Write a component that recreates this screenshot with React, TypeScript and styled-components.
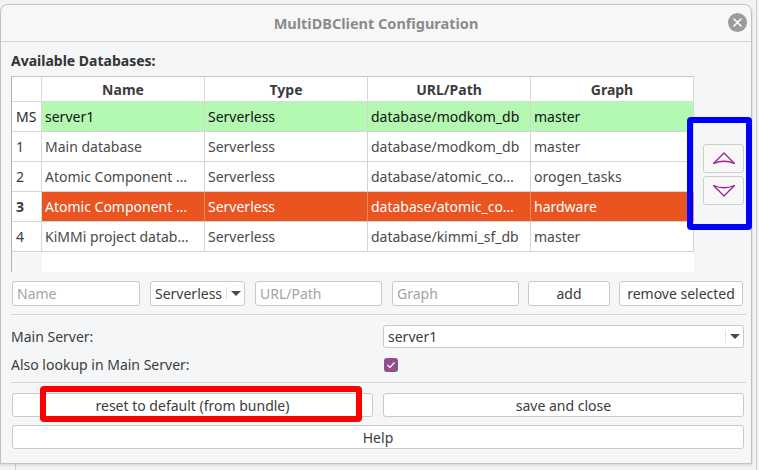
import React from "react";
import styled, { createGlobalStyle } from "styled-components";

const Global = createGlobalStyle`
  html, body { margin: 0; padding: 0; }
  body {
    width: 759px; height: 470px; overflow: hidden;
    background: #f3f3f3;
    font-family: "Noto Sans", "DejaVu Sans", sans-serif;
    font-size: 14px; color: #3c3c3c;
  }
  * { box-sizing: border-box; }
`;

const Screen = styled.div`
  position: relative;
  width: 759px; height: 470px;
  padding-top: 4px;
`;

const BackLine = styled.div<{ $x: number; $y: number; $w: number; $h: number }>`
  position: absolute;
  left: ${(p) => p.$x}px; top: ${(p) => p.$y}px;
  width: ${(p) => p.$w}px; height: ${(p) => p.$h}px;
  background: #cfcfcf;
`;

const Window = styled.div`
  position: relative;
  width: 752px; height: 460px;
  background: #f5f6f7;
  border: 1px solid #c2c2c2;
  border-radius: 8px 8px 0 0;
  box-shadow: 0 1px 3px rgba(0,0,0,0.15);
  display: flex; flex-direction: column;
`;

const TitleBar = styled.div`
  position: relative;
  height: 37px;
  background: #f7f7f7;
  border-bottom: 1px solid #d6d6d6;
  border-radius: 8px 8px 0 0;
  display: flex; align-items: center; justify-content: center;
  font-weight: 700; color: #8b8b8b; font-size: 14.5px;
`;

const CloseButton = styled.div`
  position: absolute; right: 4px; top: 8px;
  width: 19px; height: 19px; border-radius: 50%;
  background: #9b9b9b;
  display: flex; align-items: center; justify-content: center;
`;

const Content = styled.div`
  flex: 1;
  padding: 9px 6px 0 10px;
  display: flex; flex-direction: column;
`;

const SectionLabel = styled.div`
  font-weight: 700; color: #333;
  line-height: 20px; height: 20px;
  margin-bottom: 5px;
`;

const TableArea = styled.div`
  display: flex; align-items: center;
`;

const Table = styled.div`
  width: 683px; height: 196px;
  background: #fff;
  border-top: 1px solid #c6c6c6;
  border-left: 1px solid #b4b4b4;
  display: grid;
  grid-template-columns: 30px 163px 163px 163px 163px;
  grid-template-rows: 25px repeat(5, 30px) 1fr;
`;

const HeadCell = styled.div`
  border-right: 1px solid #d9d9d9;
  border-bottom: 1px solid #d9d9d9;
  display: flex; align-items: center; justify-content: center;
  font-weight: 700; color: #3c3c3c;
`;

type RowKind = "main" | "normal" | "selected";

const RowHead = styled.div<{ $kind: RowKind }>`
  border-right: 1px solid #d9d9d9;
  border-bottom: 1px solid #d4d4d4;
  display: flex; align-items: center;
  padding-left: 4px;
  background: #fff;
  color: ${(p) => (p.$kind === "main" ? "#2a2a2a" : "#3c3c3c")};
  font-weight: ${(p) => (p.$kind === "selected" ? 700 : 400)};
`;

const Cell = styled.div<{ $kind: RowKind }>`
  border-right: 1px solid ${(p) => (p.$kind === "selected" ? "#f08a64" : "#d4d4d4")};
  border-bottom: 1px solid #d4d4d4;
  display: flex; align-items: center;
  padding-left: 3px;
  white-space: nowrap; overflow: hidden;
  background: ${(p) =>
    p.$kind === "main" ? "#b3f9b1" : p.$kind === "selected" ? "#e95420" : "#fff"};
  color: ${(p) =>
    p.$kind === "main" ? "#111" : p.$kind === "selected" ? "#fff" : "#4a4a4a"};
`;

const FillerHead = styled.div`
  background: #f6f6f6;
`;

const Filler = styled.div`
  grid-column: span 4;
  background: #fff;
`;

const SideButtons = styled.div`
  margin-left: 9px;
  display: flex; flex-direction: column; gap: 3px;
`;

const ArrowButton = styled.div`
  width: 41px; height: 29px;
  border: 1px solid #cdcdcd; border-radius: 3px;
  background: #f7f7f7;
  display: flex; align-items: center; justify-content: center;
`;

const InputRow = styled.div`
  margin-top: 9px; margin-left: 1px;
  height: 25px;
  display: flex; align-items: stretch;
`;

const TextInput = styled.div<{ $w: number; $gap: number }>`
  width: ${(p) => p.$w}px;
  margin-right: ${(p) => p.$gap}px;
  background: #fff;
  border: 1px solid #c9c9c9; border-radius: 3px;
  color: #a3a3a3;
  display: flex; align-items: center;
  padding-left: 4px;
`;

const Combo = styled.div<{ $w: number; $gap: number }>`
  width: ${(p) => p.$w}px;
  margin-right: ${(p) => p.$gap}px;
  background: #fff;
  border: 1px solid #c9c9c9; border-radius: 3px;
  display: flex; align-items: center;
  padding-left: 4px;
  color: #3c3c3c;
`;

const ComboText = styled.span`
  flex: 1;
  white-space: nowrap;
`;

const ComboArrow = styled.div`
  width: 18px; height: 60%;
  border-left: 1px solid #e2e2e2;
  display: flex; align-items: center; justify-content: center;
  &::after {
    content: "";
    border-left: 5px solid transparent;
    border-right: 5px solid transparent;
    border-top: 5px solid #4a4a4a;
  }
`;

const Button = styled.div<{ $w?: number; $gap?: number }>`
  ${(p) => (p.$w ? `width: ${p.$w}px;` : "flex: 1;")}
  margin-right: ${(p) => p.$gap ?? 0}px;
  background: #fff;
  border: 1px solid #c9c9c9; border-radius: 3px;
  display: flex; align-items: center; justify-content: center;
  color: #3c3c3c;
  white-space: nowrap;
`;

const Separator = styled.div<{ $top: number }>`
  margin-top: ${(p) => p.$top}px;
  margin-right: -1px;
  height: 1px;
  background: #d3d3d3;
`;

const FormGrid = styled.div`
  margin-top: 10px;
  display: grid;
  grid-template-columns: 372px 1fr;
  grid-template-rows: 23px 22px;
  row-gap: 6px;
  align-items: center;
`;

const FormLabel = styled.div`
  color: #3c3c3c; line-height: 20px;
`;

const MainCombo = styled.div`
  height: 23px; margin-right: 1px;
  background: #fff;
  border: 1px solid #c9c9c9; border-radius: 3px;
  display: flex; align-items: center;
  padding-left: 4px;
  color: #3c3c3c;
`;

const Check = styled.div`
  margin-left: 1px;
  width: 14px; height: 14px; border-radius: 3px;
  background: #924e8c;
  display: flex; align-items: center; justify-content: center;
`;

const ButtonRow = styled.div`
  margin-top: 10px; margin-left: 1px; margin-right: 1px;
  height: 24px;
  display: flex;
`;

const HelpRow = styled.div`
  margin-top: 8px; margin-left: 1px; margin-right: 1px;
  height: 24px;
  display: flex;
`;

const Annotation = styled.div<{ $x: number; $y: number; $w: number; $h: number; $c: string }>`
  position: absolute;
  left: ${(p) => p.$x}px; top: ${(p) => p.$y}px;
  width: ${(p) => p.$w}px; height: ${(p) => p.$h}px;
  border: 6px solid ${(p) => p.$c};
  border-radius: 4px;
  pointer-events: none;
`;

const Chevron = ({ down }: { down?: boolean }) => (
  <svg width="24" height="15" viewBox="0 0 24 15">
    <path
      d={
        down
          ? "M1.5 2.5 L12 13 L22.5 2.5 Q12 7 1.5 2.5 Z"
          : "M1.5 12.5 L12 2 L22.5 12.5 Q12 8 1.5 12.5 Z"
      }
      fill="none"
      stroke="#9c1f99"
      strokeWidth="1.3"
      strokeLinejoin="round"
    />
  </svg>
);

const rows: { head: string; kind: RowKind; cells: string[] }[] = [
  { head: "MS", kind: "main", cells: ["server1", "Serverless", "database/modkom_db", "master"] },
  { head: "1", kind: "normal", cells: ["Main database", "Serverless", "database/modkom_db", "master"] },
  { head: "2", kind: "normal", cells: ["Atomic Component …", "Serverless", "database/atomic_co…", "orogen_tasks"] },
  { head: "3", kind: "selected", cells: ["Atomic Component …", "Serverless", "database/atomic_co…", "hardware"] },
  { head: "4", kind: "normal", cells: ["KiMMi project datab…", "Serverless", "database/kimmi_sf_db", "master"] },
];

export default function App() {
  return (
    <Screen>
      <Global />
      <BackLine $x={756} $y={0} $w={1} $h={470} />
      <BackLine $x={15} $y={462} $w={1} $h={8} />
      <Window>
        <TitleBar>
          MultiDBClient Configuration
          <CloseButton>
            <svg width="9" height="9" viewBox="0 0 9 9">
              <path d="M1 1 L8 8 M8 1 L1 8" stroke="#fff" strokeWidth="1.6" strokeLinecap="round" />
            </svg>
          </CloseButton>
        </TitleBar>
        <Content>
          <SectionLabel>Available Databases:</SectionLabel>
          <TableArea>
            <Table>
              <HeadCell />
              <HeadCell>Name</HeadCell>
              <HeadCell>Type</HeadCell>
              <HeadCell>URL/Path</HeadCell>
              <HeadCell>Graph</HeadCell>
              {rows.map((r) => (
                <React.Fragment key={r.head}>
                  <RowHead $kind={r.kind}>{r.head}</RowHead>
                  {r.cells.map((c, i) => (
                    <Cell key={i} $kind={r.kind}>{c}</Cell>
                  ))}
                </React.Fragment>
              ))}
              <FillerHead />
              <Filler />
            </Table>
            <SideButtons>
              <ArrowButton><Chevron /></ArrowButton>
              <ArrowButton><Chevron down /></ArrowButton>
            </SideButtons>
          </TableArea>
          <InputRow>
            <TextInput $w={128} $gap={10}>Name</TextInput>
            <Combo $w={95} $gap={10}>
              <ComboText>Serverless</ComboText>
              <ComboArrow />
            </Combo>
            <TextInput $w={127} $gap={10}>URL/Path</TextInput>
            <TextInput $w={127} $gap={9}>Graph</TextInput>
            <Button $w={82} $gap={9}>add</Button>
            <Button $w={124}>remove selected</Button>
          </InputRow>
          <Separator $top={8} />
          <FormGrid>
            <FormLabel>Main Server:</FormLabel>
            <MainCombo>
              <ComboText>server1</ComboText>
              <ComboArrow />
            </MainCombo>
            <FormLabel>Also lookup in Main Server:</FormLabel>
            <Check>
              <svg width="10" height="8" viewBox="0 0 10 8">
                <path d="M1.5 4 L4 6.5 L8.5 1.5" fill="none" stroke="#fff" strokeWidth="1.2" />
              </svg>
            </Check>
          </FormGrid>
          <Separator $top={6} />
          <ButtonRow>
            <Button $gap={10}>reset to default (from bundle)</Button>
            <Button>save and close</Button>
          </ButtonRow>
          <HelpRow>
            <Button>Help</Button>
          </HelpRow>
        </Content>
      </Window>
      <Annotation $x={40} $y={386} $w={322} $h={36} $c="#ff0000" />
      <Annotation $x={687} $y={117} $w={65} $h={113} $c="#0000ff" />
    </Screen>
  );
}
